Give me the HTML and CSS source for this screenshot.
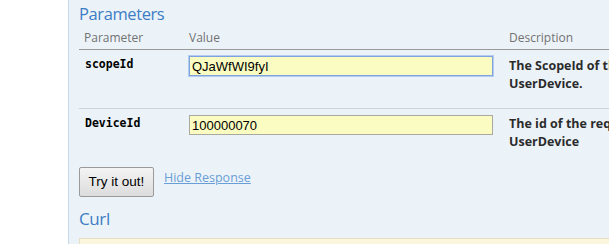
FILE: index.html
```html
<!DOCTYPE html>
<html>
<head>
<meta charset="utf-8">
<link rel="stylesheet" href="styles.css">
</head>
<body>
<div class="page">
  <div class="gutter"></div>
  <div class="panel">
    <h4 class="heading">Parameters</h4>
    <table class="params">
      <colgroup>
        <col class="w-name">
        <col class="w-value">
        <col class="w-desc">
      </colgroup>
      <thead>
        <tr>
          <th>Parameter</th>
          <th>Value</th>
          <th>Description</th>
        </tr>
      </thead>
      <tbody>
        <tr class="row1">
          <td class="code">scopeId</td>
          <td class="val"><input class="field focused" type="text" value="QJaWfWI9fyI"></td>
          <td class="desc">The ScopeId of the UserDevice.</td>
        </tr>
        <tr class="row2">
          <td class="code">DeviceId</td>
          <td class="val"><input class="field" type="text" value="100000070"></td>
          <td class="desc">The id of the requested UserDevice</td>
        </tr>
      </tbody>
    </table>
    <div class="actions">
      <button class="try">Try it out!</button>
      <a class="hide" href="#">Hide Response</a>
    </div>
    <h4 class="heading curl">Curl</h4>
    <div class="curlbox"></div>
  </div>
</div>
</body>
</html>
```
FILE: styles.css
```css
html, body {
  margin: 0;
  padding: 0;
  background: #ffffff;
  overflow: hidden;
}
.page {
  display: flex;
  width: 609px;
  height: 244px;
  overflow: hidden;
}
.gutter {
  width: 68px;
  flex: none;
}
.panel {
  flex: none;
  width: 700px;
  background: #ebf3f9;
  border-left: 1px solid #c5d9e8;
  padding: 0 0 0 10px;
  font-family: "Open Sans", "Noto Sans", sans-serif;
}
.heading {
  margin: 0;
  padding-top: 3px;
  font-weight: normal;
  font-size: 16.5px;
  letter-spacing: -0.4px;
  line-height: 22px;
  color: #3d7dc4;
}
.params {
  border-collapse: collapse;
  table-layout: fixed;
  width: 620px;
  margin-top: 1px;
}
.w-name { width: 105px; }
.w-value { width: 320px; }
.w-desc { width: 195px; }
.params th {
  text-align: left;
  font-weight: normal;
  font-size: 12px;
  color: #727272;
  padding: 4px 5px 3px;
  line-height: 16px;
  border-bottom: 1px solid #9a9a9a;
  vertical-align: top;
}
.params td {
  vertical-align: top;
  padding: 5px 5px 0;
  box-sizing: border-box;
}
.row1 td {
  height: 59px;
  border-bottom: 1px solid #cfd3d6;
}
.row2 td {
  height: 50px;
  padding-top: 6px;
}
.params td.code {
  font-family: "DejaVu Sans Mono", monospace;
  font-weight: bold;
  font-size: 11.5px;
  line-height: 16px;
  color: #000;
  padding-left: 6px;
  padding-top: 6px;
}
.params .row2 td.code { padding-top: 6px; }
.field {
  display: block;
  box-sizing: border-box;
  width: 304px;
  height: 20px;
  margin: 1px 0 0;
  padding: 1px 2px 0;
  background: #fbfcc1;
  border: 1px solid #aaa9a0;
  font-family: "Liberation Sans", Arial, sans-serif;
  font-size: 13px;
  color: #000;
  outline: none;
}
.row2 .field { margin-top: 0; }
.field.focused {
  border: 1px solid #7ea4e0;
  box-shadow: 0 0 0 1px #b5cbef;
}
.params td.desc {
  font-size: 12.5px;
  font-weight: bold;
  color: #2b2b2b;
  line-height: 18px;
  padding-top: 7px;
  white-space: normal;
}
.params .row2 td.desc { padding-top: 6px; }
.actions {
  display: flex;
  align-items: flex-start;
  gap: 10px;
  margin-top: 8px;
}
.try {
  flex: none;
  width: 75px;
  height: 30px;
  margin: 0;
  border: 1px solid #9a9a9a;
  border-radius: 2px;
  background: linear-gradient(#f4f4f4, #dcdcdc);
  font-family: "Liberation Sans", Arial, sans-serif;
  font-size: 13.5px;
  color: #000;
  padding: 0;
}
.hide {
  font-size: 12.5px;
  color: #6a9ed6;
  text-decoration: underline;
  line-height: 18px;
  margin-top: 2px;
}
.heading.curl {
  padding-top: 11px;
  font-size: 17px;
}
.curlbox {
  margin-top: 8px;
  height: 40px;
  width: 600px;
  background: #fcf6dc;
  border: 1px solid #e8dfc3;
}
```
